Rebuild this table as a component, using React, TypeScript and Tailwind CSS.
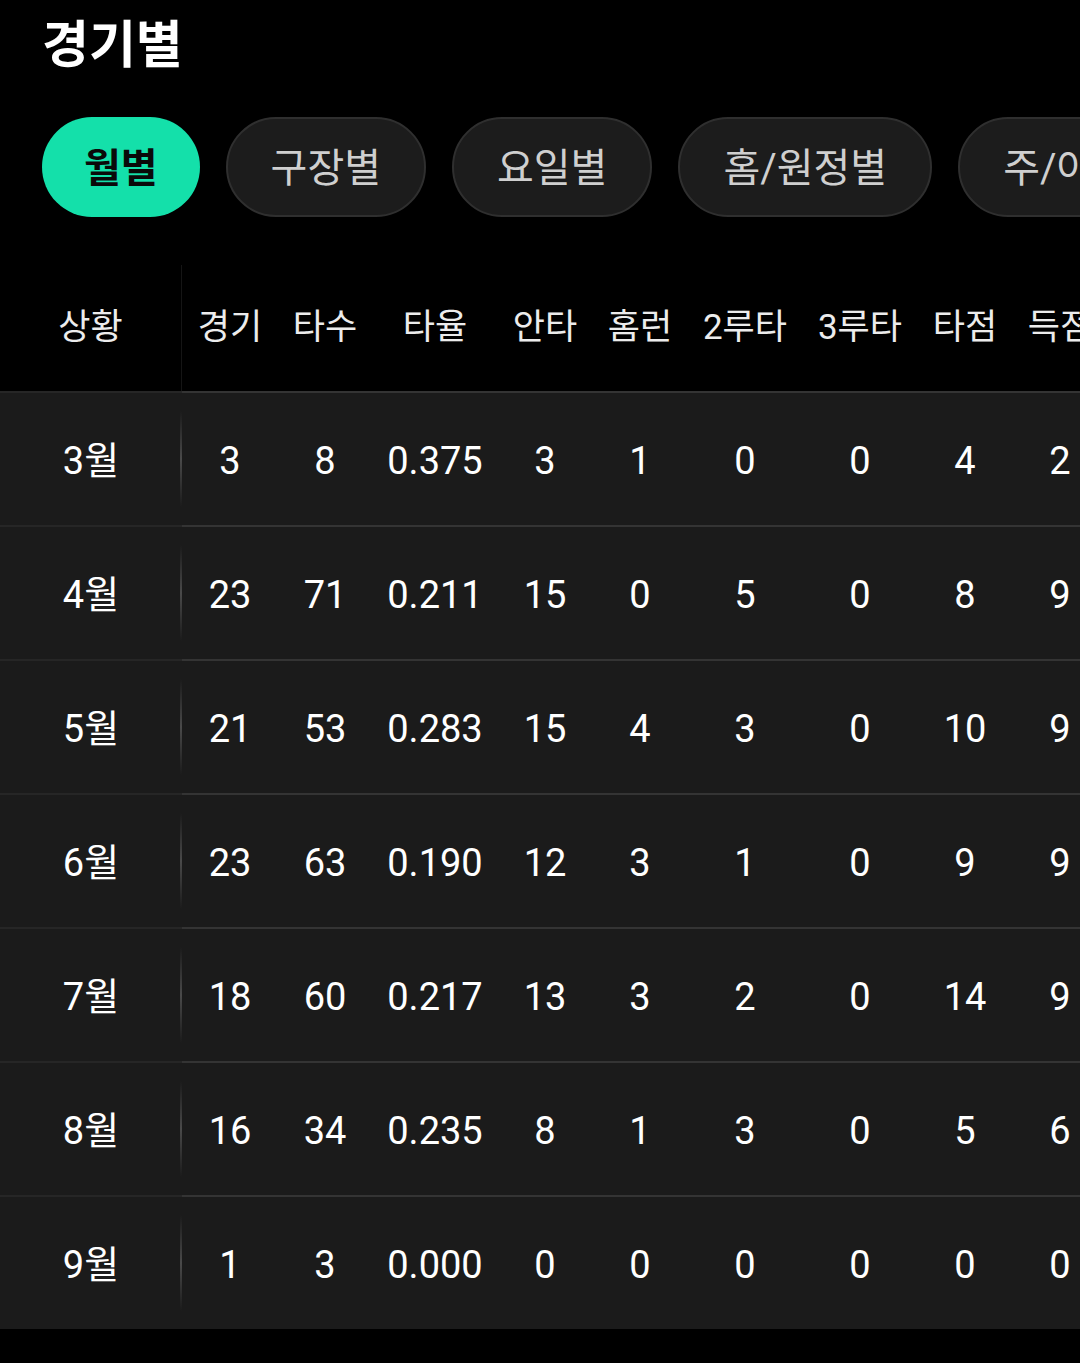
import React from 'react';

const FONT = '"Roboto", "Noto Sans CJK KR", sans-serif';

const tabs = ['월별', '구장별', '요일별', '홈/원정별', '주/야간별'];

const headers = ['경기', '타수', '타율', '안타', '홈런', '2루타', '3루타', '타점', '득점'];

const rows: [string, (string | number)[]][] = [
  ['3월', [3, 8, '0.375', 3, 1, 0, 0, 4, 2]],
  ['4월', [23, 71, '0.211', 15, 0, 5, 0, 8, 9]],
  ['5월', [21, 53, '0.283', 15, 4, 3, 0, 10, 9]],
  ['6월', [23, 63, '0.190', 12, 3, 1, 0, 9, 9]],
  ['7월', [18, 60, '0.217', 13, 3, 2, 0, 14, 9]],
  ['8월', [16, 34, '0.235', 8, 1, 3, 0, 5, 6]],
  ['9월', [1, 3, '0.000', 0, 0, 0, 0, 0, 0]],
];

// column widths picked so the centres line up with the screenshot
const gridCols = 'grid grid-cols-[182px_96px_94px_126px_94px_96px_114px_116px_94px_96px]';

const App: React.FC = () => {
  return (
    <div className="min-h-[1363px] w-[1080px] overflow-hidden bg-black text-white" style={{ fontFamily: FONT }}>
      {/* Title */}
      <div className="flex h-[90px] items-center px-[42px]">
        <h1 className="text-[51px] font-bold leading-none">경기별</h1>
      </div>

      {/* Filter pills */}
      <div className="mt-[27px] flex gap-[26px] overflow-hidden whitespace-nowrap pl-[42px]">
        {tabs.map((t, i) =>
          i === 0 ? (
            <button
              key={t}
              className="flex h-[100px] shrink-0 items-center rounded-full bg-[#14e0aa] px-[42px] pt-[3px] text-[40px] font-bold text-[#0a0a0a]"
            >
              {t}
            </button>
          ) : (
            <button
              key={t}
              className="flex h-[100px] shrink-0 items-center rounded-full border-2 border-[#2f2f2f] bg-[#1c1c1c] px-[43px] pt-[3px] text-[40px] text-[#cfcfcf]"
            >
              {t}
            </button>
          )
        )}
      </div>

      {/* Table */}
      <div className="mt-[43px] overflow-hidden">
        <div className={`${gridCols} h-[131px] items-stretch pt-[5px] text-[35px] text-[#ececec]`}>
          <div className="flex items-center justify-center border-r border-[#151515]">상황</div>
          {headers.map((h) => (
            <div key={h} className="flex items-center justify-center whitespace-nowrap">
              {h}
            </div>
          ))}
        </div>

        {rows.map(([month, vals]) => (
          <div key={month} className={`${gridCols} h-[134px] bg-[#1b1b1b] text-[38px]`}>
            <div className="relative flex items-center justify-center border-t-2 border-[#262626] pt-[4px]">
              {month}
              <span className="absolute right-0 top-[18px] bottom-[18px] w-[2px] bg-gradient-to-b from-transparent via-[#4a4a4a] to-transparent" />
            </div>
            {vals.map((v, i) => (
              <div key={i} className="flex items-center justify-center border-t-2 border-[#343434] pt-[4px]">
                {v}
              </div>
            ))}
          </div>
        ))}
      </div>
    </div>
  );
};

export default App;
